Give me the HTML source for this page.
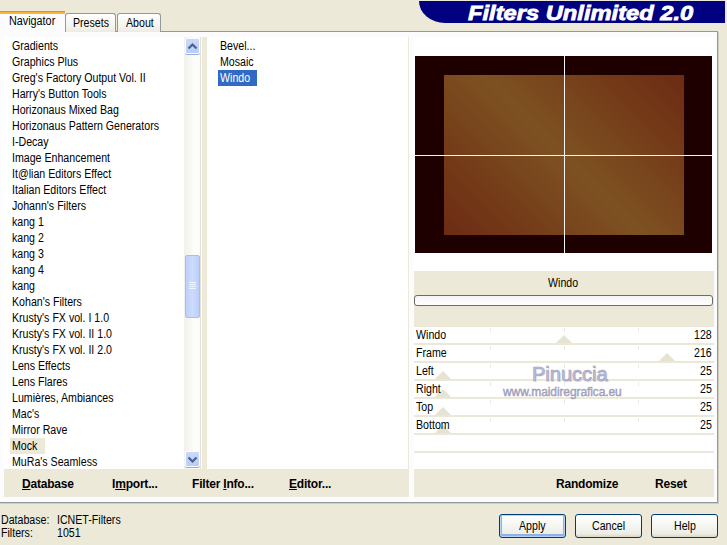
<!DOCTYPE html>
<html><head><meta charset="utf-8">
<style>
*{margin:0;padding:0;box-sizing:border-box}
html,body{width:727px;height:545px;overflow:hidden;background:#ECE9D8;font-family:"Liberation Sans",sans-serif;font-size:12px;color:#000}
body{position:relative}
.a{position:absolute}
.t{position:absolute;white-space:nowrap;line-height:16px;transform:scaleX(.885);transform-origin:0 0}
.b{position:absolute;white-space:nowrap;line-height:16px;font-weight:bold;letter-spacing:-0.2px}
.tab{position:absolute;top:13px;height:19px;border:1px solid #919B9C;border-bottom:none;border-radius:3px 3px 0 0;background:linear-gradient(#FFFFFF,#F4F3EE 70%,#ECEBE3)}
.sep{position:absolute;background:#ECE9D8}
.row{position:absolute;left:414px;width:300px;height:16px;background:#fff}
.rsep{position:absolute;left:414px;width:300px;height:2px;background:#EBE8D9}
.thumb{position:absolute;width:0;height:0;border-left:8px solid transparent;border-right:8px solid transparent;border-bottom:8px solid #E6E3D1}
.tick{position:absolute;width:1px;height:4px;background:#EAEAEA}
.btn{position:absolute;top:514px;width:67px;height:24px;border:1px solid #003C74;border-radius:3px;background:linear-gradient(#FFFFFF 0%,#F5F5F1 50%,#EDEDE6 85%,#D8D4C8 100%)}
.sbtn{position:absolute;left:185px;width:15px;height:16px;border:1px solid #FDFDFF;border-radius:2px;background:linear-gradient(#C9D9FD,#B9CDF9);box-shadow:0 1px 0 #8FB0E6}
</style></head><body>

<!-- banner -->
<div class="a" style="left:419px;top:1px;width:306px;height:22px;background:#000080;border-bottom-left-radius:26px 22px"></div>
<div class="a" style="left:468px;top:2.5px;line-height:20px;color:#fff;font-weight:bold;font-style:italic;font-size:20px;white-space:nowrap;transform:scaleX(1.185);transform-origin:0 0;-webkit-text-stroke:0.8px #fff">Filters Unlimited 2.0</div>

<!-- tab page -->
<div class="a" style="left:-2px;top:31px;width:720px;height:472px;border:1px solid #919B9C;background:#FCFCFE;box-shadow:1px 1px 0 #D0CDBE"></div>

<!-- tabs -->
<div class="tab" style="left:65px;width:51px"></div>
<div class="t" style="left:73px;top:15px">Presets</div>
<div class="tab" style="left:117px;width:44px"></div>
<div class="t" style="left:126px;top:15px">About</div>
<div class="a" style="left:0;top:11px;width:65px;height:21px;background:#FCFCFE"></div>
<div class="a" style="left:0;top:11px;width:65px;height:3px;background:#F9B63A;border-top:1px solid #E68B2C"></div>
<div class="t" style="left:9px;top:13px;transform:scaleX(.9)">Navigator</div>

<!-- left list -->
<div class="a" style="left:4px;top:37px;width:180px;height:432px;background:#fff"></div>
<!--L--><div id="leftitems">
<div class="a" style="left:10px;top:438px;width:35px;height:16px;background:#ECE9D8"></div>
<div class="t" style="left:12px;top:38px">Gradients</div>
<div class="t" style="left:12px;top:54px">Graphics Plus</div>
<div class="t" style="left:12px;top:70px">Greg's Factory Output Vol. II</div>
<div class="t" style="left:12px;top:86px">Harry's Button Tools</div>
<div class="t" style="left:12px;top:102px">Horizonaus Mixed Bag</div>
<div class="t" style="left:12px;top:118px">Horizonaus Pattern Generators</div>
<div class="t" style="left:12px;top:134px">I-Decay</div>
<div class="t" style="left:12px;top:150px">Image Enhancement</div>
<div class="t" style="left:12px;top:166px">It@lian Editors Effect</div>
<div class="t" style="left:12px;top:182px">Italian Editors Effect</div>
<div class="t" style="left:12px;top:198px">Johann's Filters</div>
<div class="t" style="left:12px;top:214px">kang 1</div>
<div class="t" style="left:12px;top:230px">kang 2</div>
<div class="t" style="left:12px;top:246px">kang 3</div>
<div class="t" style="left:12px;top:262px">kang 4</div>
<div class="t" style="left:12px;top:278px">kang</div>
<div class="t" style="left:12px;top:294px">Kohan's Filters</div>
<div class="t" style="left:12px;top:310px">Krusty's FX vol. I 1.0</div>
<div class="t" style="left:12px;top:326px">Krusty's FX vol. II 1.0</div>
<div class="t" style="left:12px;top:342px">Krusty's FX vol. II 2.0</div>
<div class="t" style="left:12px;top:358px">Lens Effects</div>
<div class="t" style="left:12px;top:374px">Lens Flares</div>
<div class="t" style="left:12px;top:390px">Lumières, Ambiances</div>
<div class="t" style="left:12px;top:406px">Mac's</div>
<div class="t" style="left:12px;top:422px">Mirror Rave</div>
<div class="t" style="left:12px;top:438px">Mock</div>
<div class="t" style="left:12px;top:454px">MuRa's Seamless</div>
</div><!--/L-->
<!-- scrollbar -->
<div class="a" style="left:184px;top:37px;width:17px;height:432px;background:linear-gradient(90deg,#F1F0EA,#FDFDF9 60%,#FAFAF6)"></div>
<div class="sbtn" style="top:38px"></div>
<svg class="a" style="left:184px;top:37px" width="17" height="18"><path d="M4.5 11.5 L8.5 7.5 L12.5 11.5" fill="none" stroke="#4D6185" stroke-width="2.2"/></svg>
<div class="sbtn" style="top:451px"></div>
<svg class="a" style="left:184px;top:450px" width="17" height="18"><path d="M4.5 7.5 L8.5 11.5 L12.5 7.5" fill="none" stroke="#4D6185" stroke-width="2.2"/></svg>
<div class="a" style="left:185px;top:255px;width:15px;height:63px;border:1px solid #A8BDF2;border-radius:2px;background:linear-gradient(90deg,#BFD1FC,#CCDBFE 50%,#BCCEFA)"></div>
<div class="a" style="left:189px;top:282px;width:7px;height:1px;background:#EEF3FE;box-shadow:0 2px 0 #EEF3FE,0 4px 0 #EEF3FE,0 6px 0 #EEF3FE"></div>
<div class="a" style="left:200px;top:37px;width:1px;height:432px;background:#E2E2DA"></div><div class="a" style="left:201px;top:37px;width:1px;height:432px;background:#FCFCFA"></div><div class="sep" style="left:202px;top:37px;width:5px;height:432px"></div>

<!-- middle list -->
<div class="a" style="left:207px;top:37px;width:201px;height:432px;background:#fff"></div>
<div class="sep" style="left:408px;top:37px;width:1px;height:432px"></div>
<div class="t" style="left:220px;top:38px">Bevel...</div>
<div class="t" style="left:220px;top:54px">Mosaic</div>
<div class="a" style="left:218px;top:70px;width:39px;height:16px;background:#316AC5"></div>
<div class="t" style="left:220px;top:70px;color:#fff">Windo</div>

<!-- bottom bars -->
<div class="sep" style="left:4px;top:469px;width:405px;height:28px"></div>
<div class="sep" style="left:414px;top:469px;width:300px;height:28px"></div>
<div class="b" style="left:22px;top:476px"><u>D</u>atabase</div>
<div class="b" style="left:112px;top:476px">I<u>m</u>port...</div>
<div class="b" style="left:192px;top:476px">Filter <u>I</u>nfo...</div>
<div class="b" style="left:289px;top:476px"><u>E</u>ditor...</div>
<div class="b" style="left:556px;top:476px">Randomize</div>
<div class="b" style="left:655px;top:476px">Reset</div>

<!-- preview -->
<div class="a" style="left:414px;top:37px;width:300px;height:234px;background:#fff"></div>
<div class="a" style="left:415px;top:56px;width:297px;height:197px;background:#1E0000"></div>
<div class="a" style="left:444px;top:75px;width:240px;height:160px;background:linear-gradient(45deg,#6D2B15 0%,#743B18 22%,#7A4A1E 40%,#7D5121 50%,#7A4A1E 60%,#743B18 78%,#6D2B15 100%)"></div>
<div class="a" style="left:564px;top:56px;width:1px;height:197px;background:#F4F4F4"></div>
<div class="a" style="left:415px;top:155px;width:297px;height:1px;background:#F4F4F4"></div>
<div class="sep" style="left:414px;top:271px;width:300px;height:56px"></div>
<div class="t" style="left:548px;top:275px">Windo</div>
<div class="a" style="left:414px;top:295px;width:299px;height:11px;border:1px solid #6B6B6B;border-radius:3px;background:linear-gradient(#F4F4F4,#FFFFFF)"></div>

<!--R--><div id="rows">
<div class="row" style="top:327px"></div><div class="rsep" style="top:343px"></div>
<div class="tick" style="left:490px;top:328px"></div><div class="tick" style="left:490px;top:345px"></div><div class="tick" style="left:564px;top:328px"></div><div class="tick" style="left:564px;top:345px"></div><div class="tick" style="left:638px;top:328px"></div><div class="tick" style="left:638px;top:345px"></div><div class="thumb" style="left:556px;top:335px"></div>
<div class="t" style="left:416px;top:327px">Windo</div><div class="t" style="left:694px;top:327px">128</div>
<div class="row" style="top:345px"></div><div class="rsep" style="top:361px"></div>
<div class="tick" style="left:490px;top:346px"></div><div class="tick" style="left:490px;top:363px"></div><div class="tick" style="left:564px;top:346px"></div><div class="tick" style="left:564px;top:363px"></div><div class="tick" style="left:638px;top:346px"></div><div class="tick" style="left:638px;top:363px"></div><div class="thumb" style="left:659px;top:353px"></div>
<div class="t" style="left:416px;top:345px">Frame</div><div class="t" style="left:694px;top:345px">216</div>
<div class="row" style="top:363px"></div><div class="rsep" style="top:379px"></div>
<div class="tick" style="left:490px;top:364px"></div><div class="tick" style="left:490px;top:381px"></div><div class="tick" style="left:564px;top:364px"></div><div class="tick" style="left:564px;top:381px"></div><div class="tick" style="left:638px;top:364px"></div><div class="tick" style="left:638px;top:381px"></div><div class="thumb" style="left:435px;top:371px"></div>
<div class="t" style="left:416px;top:363px">Left</div><div class="t" style="left:700px;top:363px">25</div>
<div class="row" style="top:381px"></div><div class="rsep" style="top:397px"></div>
<div class="tick" style="left:490px;top:382px"></div><div class="tick" style="left:490px;top:399px"></div><div class="tick" style="left:564px;top:382px"></div><div class="tick" style="left:564px;top:399px"></div><div class="tick" style="left:638px;top:382px"></div><div class="tick" style="left:638px;top:399px"></div><div class="thumb" style="left:435px;top:389px"></div>
<div class="t" style="left:416px;top:381px">Right</div><div class="t" style="left:700px;top:381px">25</div>
<div class="row" style="top:399px"></div><div class="rsep" style="top:415px"></div>
<div class="tick" style="left:490px;top:400px"></div><div class="tick" style="left:490px;top:417px"></div><div class="tick" style="left:564px;top:400px"></div><div class="tick" style="left:564px;top:417px"></div><div class="tick" style="left:638px;top:400px"></div><div class="tick" style="left:638px;top:417px"></div><div class="thumb" style="left:435px;top:407px"></div>
<div class="t" style="left:416px;top:399px">Top</div><div class="t" style="left:700px;top:399px">25</div>
<div class="row" style="top:417px"></div><div class="rsep" style="top:433px"></div>
<div class="tick" style="left:490px;top:418px"></div><div class="tick" style="left:490px;top:435px"></div><div class="tick" style="left:564px;top:418px"></div><div class="tick" style="left:564px;top:435px"></div><div class="tick" style="left:638px;top:418px"></div><div class="tick" style="left:638px;top:435px"></div><div class="thumb" style="left:435px;top:425px"></div>
<div class="t" style="left:416px;top:417px">Bottom</div><div class="t" style="left:700px;top:417px">25</div>
<div class="row" style="top:435px"></div><div class="rsep" style="top:451px"></div>
<div class="row" style="top:453px"></div><div class="rsep" style="top:469px"></div>
</div><!--/R-->

<!-- status -->
<div class="t" style="left:1px;top:512px">Database:</div>
<div class="t" style="left:57px;top:512px">ICNET-Filters</div>
<div class="t" style="left:1px;top:525px">Filters:</div>
<div class="t" style="left:57px;top:525px">1051</div>
<div class="btn" style="left:499px;box-shadow:inset 0 0 0 1px #B8D3F8,inset 0 -1px 0 2px #8CB1EE"></div>
<div class="t" style="left:519px;top:518px">Apply</div>
<div class="btn" style="left:575px"></div>
<div class="t" style="left:592px;top:518px">Cancel</div>
<div class="btn" style="left:651px"></div>
<div class="t" style="left:674px;top:518px">Help</div>

<!-- watermark -->
<div class="a" style="left:532px;top:363px;font-size:20px;line-height:23px;color:#C2C2DC;white-space:nowrap;-webkit-text-stroke:0.6px #9A9AB8;text-shadow:1px 1px 0 #DCDCE8">Pinuccia</div>
<div class="a" style="left:503px;top:384px;font-size:12px;line-height:16px;color:#ABABC6;white-space:nowrap;-webkit-text-stroke:0.4px #9494B2;letter-spacing:-0.1px">www.maidiregrafica.eu</div>
</body></html>
